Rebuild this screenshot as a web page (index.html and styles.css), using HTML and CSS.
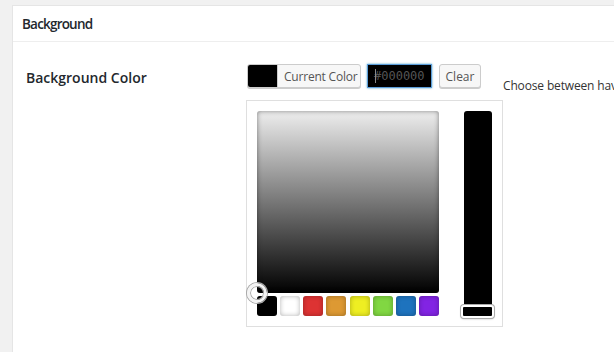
FILE: index.html
```html
<!DOCTYPE html>
<html>
<head>
<meta charset="utf-8">
<link rel="stylesheet" href="styles.css">
</head>
<body>
<div class="panel">
  <div class="panel-head"><h3 class="panel-title">Background</h3></div>
  <div class="row">
    <div class="label">Background Color</div>
    <div class="control">
      <div class="picker-top">
        <button class="current"><span class="swatch-cur"></span><span class="cur-text">Current Color</span></button>
        <div class="hex"><span class="caret"></span>#000000</div>
        <button class="clear">Clear</button>
      </div>
      <div class="picker">
        <div class="left">
          <div class="square"><span class="handle"></span></div>
          <div class="palette">
            <span class="pal" style="background:#000000"></span>
            <span class="pal" style="background:#ffffff"></span>
            <span class="pal" style="background:#dd3333"></span>
            <span class="pal" style="background:#dd9933"></span>
            <span class="pal" style="background:#eeee22"></span>
            <span class="pal" style="background:#81d742"></span>
            <span class="pal" style="background:#1e73be"></span>
            <span class="pal" style="background:#8224e3"></span>
          </div>
        </div>
        <div class="strip"><span class="slider"></span></div>
      </div>
    </div>
    <div class="desc">Choose between having a solid color or an image as background</div>
  </div>
</div>
</body>
</html>
```
FILE: styles.css
```css
html, body {
  margin: 0;
  padding: 0;
  background: #f1f1f1;
  overflow: hidden;
  height: 352px;
}
body {
  font-family: "Open Sans", "DejaVu Sans", sans-serif;
  color: #23282d;
}
.panel {
  margin: 5px -40px 0 12px;
  background: #fff;
  border: 1px solid #e5e5e5;
  height: 400px;
}
.panel-head {
  height: 35px;
  border-bottom: 1px solid #eeeeee;
  display: flex;
  align-items: center;
  padding-left: 9px;
}
.panel-title {
  margin: 0;
  font-size: 13.5px;
  font-weight: 600;
  line-height: 20px;
  letter-spacing: -0.8px;
}
.row {
  display: flex;
  padding: 22px 0 0 13px;
}
.label {
  width: 220px;
  flex: none;
  font-size: 14px;
  font-weight: 600;
  line-height: 20px;
  padding-top: 4px;
}
.control {
  flex: none;
  width: 257px;
}
.picker-top {
  display: flex;
  align-items: center;
  height: 24px;
  padding-left: 1px;
}
button {
  font-family: "Open Sans", "DejaVu Sans", sans-serif;
}
.current {
  display: flex;
  align-items: stretch;
  flex: none;
  height: 24px;
  width: 114px;
  padding: 0;
  border: 1px solid #cccccc;
  border-radius: 3px;
  background: #f7f7f7;
  box-shadow: 0 1px 0 #ccc;
  overflow: hidden;
}
.swatch-cur {
  flex: none;
  width: 29px;
  background: #000;
  border-right: 1px solid #ccc;
}
.cur-text {
  display: flex;
  align-items: center;
  padding: 0 6px;
  font-size: 12px;
  letter-spacing: -0.2px;
  color: #555;
  white-space: nowrap;
}
.hex {
  box-sizing: border-box;
  flex: none;
  margin-left: 6px;
  width: 65px;
  height: 24px;
  background: #000;
  border: 1px solid #5b9dd9;
  box-shadow: 0 0 2px rgba(30,140,190,0.8);
  font-family: "DejaVu Sans Mono", monospace;
  font-size: 12px;
  line-height: 22px;
  color: #555;
  padding-left: 6px;
  position: relative;
}
.caret {
  position: absolute;
  left: 7px;
  top: 4px;
  width: 1px;
  height: 14px;
  background: #888;
}
.clear {
  flex: none;
  margin-left: 7px;
  height: 24px;
  width: 42px;
  padding: 0;
  border: 1px solid #cccccc;
  border-radius: 3px;
  background: #f7f7f7;
  box-shadow: 0 1px 0 #ccc;
  font-size: 12px;
  color: #555;
}
.picker {
  margin-top: 12px;
  box-sizing: border-box;
  width: 257px;
  border: 1px solid #dfdfdf;
  padding: 10px 10px 9px 10px;
  display: flex;
  justify-content: space-between;
}
.left {
  width: 182px;
}
.square {
  position: relative;
  width: 182px;
  height: 182px;
  border-radius: 3px;
  background: linear-gradient(to bottom, #eeeeee, #000000);
  box-shadow: inset 0 0 5px rgba(0,0,0,0.45);
}
.handle {
  position: absolute;
  left: -10px;
  bottom: -10px;
  box-sizing: border-box;
  width: 20px;
  height: 20px;
  border-radius: 50%;
  border: 3px solid #f4f4f4;
  box-shadow: 0 0 0 1px #aaa, inset 0 0 0 1px #aaa;
}
.palette {
  margin-top: 3px;
  display: flex;
  justify-content: space-between;
}
.pal {
  width: 20px;
  height: 20px;
  border-radius: 3px;
  box-shadow: inset 0 0 5px rgba(0,0,0,0.3);
}
.strip {
  position: relative;
  width: 28px;
  height: 206px;
  background: #000;
  border-radius: 3px;
}
.slider {
  position: absolute;
  left: -3px;
  bottom: -1px;
  box-sizing: border-box;
  width: 33px;
  height: 13px;
  border-radius: 3px;
  background: #000;
  border: 2px solid #fff;
  box-shadow: 0 0 0 1px #aaa, 0 1px 2px rgba(0,0,0,0.3);
}
.desc {
  flex: none;
  padding-top: 13px;
  font-size: 12px;
  letter-spacing: -0.15px;
  line-height: 18px;
  color: #333;
  white-space: nowrap;
}
```
